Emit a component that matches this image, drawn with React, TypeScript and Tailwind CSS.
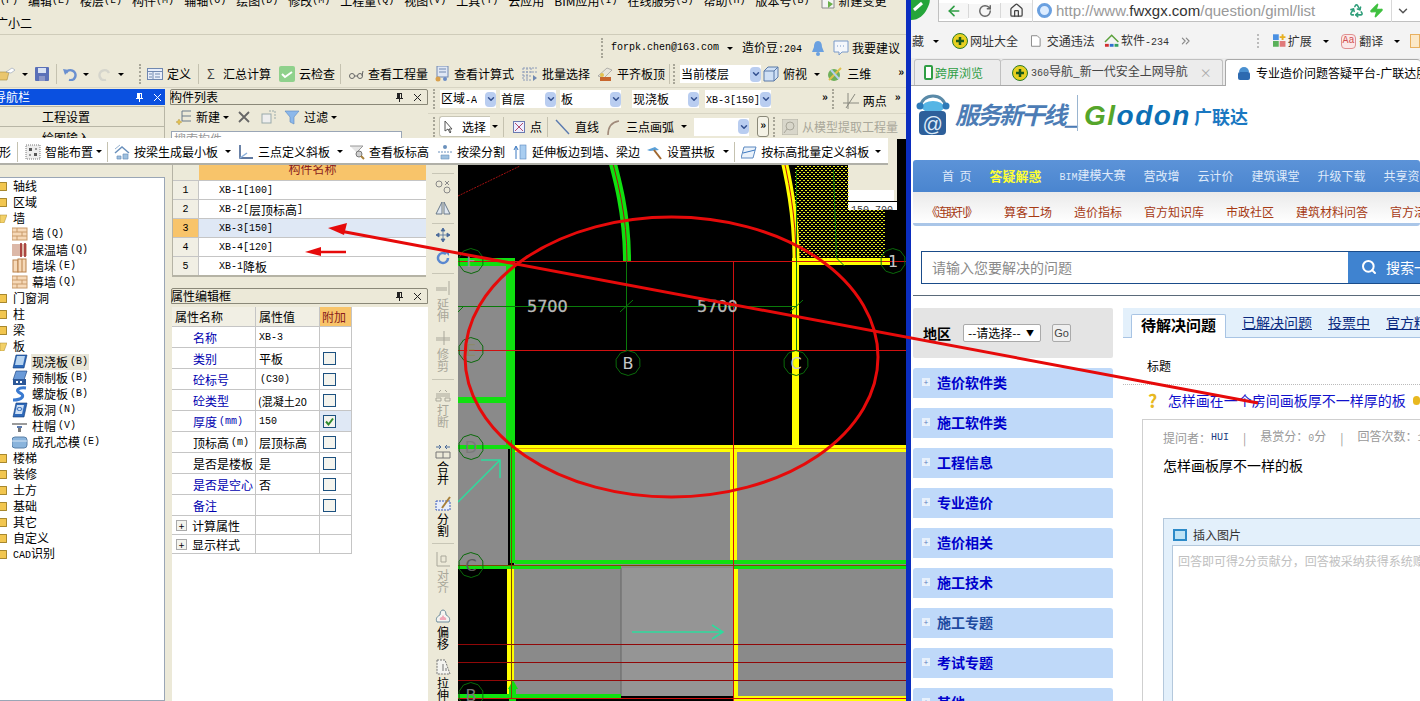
import type { ReactNode } from "react";
import { ArrowLeft, RotateCw, House, Search, ChevronDown, Zap, Recycle, ChevronsRight } from "lucide-react";

const mono = "[font-family:'Liberation_Mono',monospace] text-[10px]";

function Caret({ className = "" }: { className?: string }) {
  return <span className={`inline-block shrink-0 border-x-[3px] border-t-[3px] border-x-transparent border-t-black ${className}`} />;
}

function Grip({ className = "" }: { className?: string }) {
  return <span className={`inline-block h-[20px] w-[2px] shrink-0 border-l-2 border-dotted border-[#a8a698] ${className}`} />;
}

function Sep({ className = "" }: { className?: string }) {
  return <span className={`inline-block h-[20px] w-px shrink-0 bg-[#c5c2b0] ${className}`} />;
}

function More({ className = "" }: { className?: string }) {
  return <span className={`shrink-0 text-[11px] font-bold leading-none ${className}`}>»</span>;
}

function Ico({ children, className = "" }: { children: ReactNode; className?: string }) {
  return (
    <svg viewBox="0 0 16 16" className={`h-4 w-4 shrink-0 ${className}`}>
      {children}
    </svg>
  );
}

function Tool({ icon, label, className = "", dim }: { icon?: ReactNode; label: string; className?: string; dim?: boolean }) {
  return (
    <span className={`flex shrink-0 items-center gap-[4px] ${dim ? "text-[#a9a79a]" : "text-black"} ${className}`}>
      {icon}
      <span>{label}</span>
    </span>
  );
}

function Combo({ children, className = "" }: { children: ReactNode; className?: string }) {
  return (
    <span className={`flex h-[18px] shrink-0 items-center justify-between bg-white pl-[1px] ${className}`}>
      <span className="overflow-hidden whitespace-nowrap">{children}</span>
      <span className="flex h-[15px] w-[11px] shrink-0 items-center justify-center rounded-sm bg-[#b9cdf0]">
        <ChevronDown size={10} strokeWidth={3.5} className="text-[#33508f]" />
      </span>
    </span>
  );
}

function PinX({ light }: { light?: boolean }) {
  const color = light ? "#ffffff" : "#222222";
  return (
    <span className="flex items-center gap-[9px]">
      <svg viewBox="0 0 9 9" className="h-[9px] w-[9px]">
        <path d="M2 0h5v5h1v1H5v3H4V6H1V5h1z M5 1v4h1V1z" fill={color} fillRule="evenodd" />
      </svg>
      <svg viewBox="0 0 9 9" className="h-[9px] w-[9px]">
        <path d="M1 1l7 7M8 1L1 8" stroke={color} strokeWidth="1" />
      </svg>
    </span>
  );
}

/* ---- toolbar icons ---- */
const IcoOpen = (
  <Ico>
    <path d="M-3 6h12l-2 8H-3z" fill="#eac66d" stroke="#a88a3a" strokeWidth=".6" />
    <path d="M6 6l6-4 3 2-4 3z" fill="#fff" stroke="#7a8ba8" strokeWidth=".5" />
  </Ico>
);
const IcoSave = (
  <Ico>
    <rect x="1" y="1" width="14" height="14" rx="1" fill="#5a70b8" />
    <rect x="4" y="2" width="8" height="5" fill="#d9e2f2" />
    <rect x="5" y="10" width="6" height="5" fill="#8a96c8" />
  </Ico>
);
const IcoDefine = (
  <Ico>
    <rect x=".5" y="2.5" width="15" height="11" fill="#e8eefa" stroke="#7088b0" />
    <path d="M1 5.5h14M6 5.5v8M8 8h5M8 11h5M2 8h3M2 11h3" stroke="#7088b0" />
  </Ico>
);
const IcoCloud = (
  <Ico>
    <rect x="0" y="0" width="16" height="16" rx="2" fill="#8fd18c" />
    <path d="M3 8l3 3 7-5" stroke="#fff" strokeWidth="2" fill="none" />
  </Ico>
);
const IcoGlasses = (
  <Ico>
    <circle cx="4" cy="10" r="2.5" fill="none" stroke="#666" />
    <circle cx="12" cy="10" r="2.5" fill="none" stroke="#666" />
    <path d="M6.500 10h3M14 10l1-5" stroke="#666" />
  </Ico>
);
const IcoCalc = (
  <Ico>
    <rect x="3" y="0" width="11" height="11" fill="#dfe7f4" stroke="#7088b0" />
    <path d="M5 3h7M5 6h7" stroke="#7088b0" />
    <circle cx="4" cy="13" r="2.500" fill="#d9a04c" />
    <circle cx="11" cy="13" r="2" fill="#6a8cc8" />
  </Ico>
);
const IcoBatch = (
  <Ico>
    <path d="M1 2h14M1 2v12h9M5 2v12M9 2v5M1 6h14M1 10h9" stroke="#8a9ab8" strokeDasharray="2 1" fill="none" />
    <path d="M11 9l4 3-4 3z" fill="#7088b0" />
  </Ico>
);
const IcoFlat = (
  <Ico>
    <path d="M1 10L10 2l5 2-8 8z" fill="#e8e6dc" stroke="#888" strokeWidth=".6" />
    <rect x="3" y="11" width="11" height="4" fill="#c8662e" />
    <circle cx="5" cy="9" r="2" fill="#e3c14d" />
  </Ico>
);
const IcoCube = (
  <Ico>
    <path d="M1 5l4-4h10v10l-4 4H1z" fill="#cfe0f5" stroke="#5a7aa8" />
    <path d="M1 5h10v10M11 5l4-4" stroke="#5a7aa8" fill="none" />
  </Ico>
);
const Ico3d = (
  <Ico>
    <circle cx="7" cy="9" r="6" fill="#6fb05a" />
    <path d="M2 14L14 2" stroke="#e0c14d" strokeWidth="2" />
    <path d="M4 4l8 9" stroke="#b5d0ea" strokeWidth="2" />
  </Ico>
);
const IcoNew = (
  <Ico>
    <path d="M6 2h9M6 7h9M6 12h9M6 2v10" stroke="#6a7a8a" fill="none" />
    <path d="M3 10l1 2 2 1-2 1-1 2-1-2-2-1 2-1z" fill="#e3c14d" stroke="#a88a3a" strokeWidth=".4" />
  </Ico>
);
const IcoFilter = (
  <Ico>
    <path d="M1 2h14L10 8v7l-4-2V8z" fill="#8cb8ea" stroke="#5a88c0" strokeWidth=".6" />
  </Ico>
);
const IcoGrid = (
  <Ico>
    <rect x="1" y="1" width="14" height="14" fill="#eee" stroke="#7a7a7a" strokeDasharray="1 1" />
    <path d="M4 4h3v3H4zM9 9h3v3H9z" fill="#555" />
    <path d="M10 4h2v2h-2zM4 10h2v2H4z" fill="#999" />
  </Ico>
);
const IcoBeam = (
  <Ico>
    <path d="M1 9l7-6 7 6" stroke="#6a90bc" strokeWidth="1.500" fill="none" />
    <path d="M1 5l5-4M3 12h4v3H3zM9 10h5v5H9z" fill="#9fc0de" stroke="#6a90bc" strokeWidth=".7" />
  </Ico>
);
const IcoThree = (
  <Ico>
    <path d="M2 1v13h13" stroke="#2c4f84" strokeWidth="1.400" fill="none" />
    <path d="M2 14l7-5" stroke="#8ab0dc" strokeWidth="1.500" />
  </Ico>
);
const IcoLens = (
  <Ico>
    <path d="M1 2h13L9 7v3" stroke="#999" fill="#e5e5e5" />
    <circle cx="10" cy="10" r="3" fill="#cfcfcf" stroke="#777" />
    <path d="M12 12l3 3" stroke="#a8803a" strokeWidth="2" />
  </Ico>
);
const IcoSplit = (
  <Ico>
    <circle cx="8" cy="3" r="2" fill="#6a90bc" />
    <path d="M1 8h14" stroke="#6a90bc" strokeDasharray="2 1" />
    <path d="M4 11h8v4H4z" fill="#9fc0de" stroke="#6a90bc" strokeWidth=".6" />
  </Ico>
);
const IcoExtend = (
  <Ico>
    <path d="M4 15V3M2 6l2-4 2 4" stroke="#3a78c0" fill="none" />
    <rect x="8" y="1" width="6" height="14" fill="#a9cdf0" stroke="#5a88c0" strokeWidth=".6" />
  </Ico>
);
const IcoHammer = (
  <Ico>
    <path d="M0 6l8-3 4 3-9 1z" fill="#5aa0d8" />
    <path d="M7 6l7 9" stroke="#a0672e" strokeWidth="2" />
  </Ico>
);
const IcoBatchSlope = (
  <Ico>
    <path d="M3 3h12l-3 11H0z" fill="#eaf2fb" stroke="#5a88c0" />
    <path d="M2 9l12-3" stroke="#3a78c0" />
  </Ico>
);

const menus: [string, string][] = [
  ["文件", "(F)"], ["编辑", "(E)"], ["楼层", "(L)"], ["构件", "(M)"], ["辅轴", "(O)"], ["绘图", "(D)"], ["修改", "(M)"],
  ["工程量", "(Q)"], ["视图", "(V)"], ["工具", "(T)"], ["云应用", ""], ["BIM应用", "(I)"], ["在线服务", "(S)"], ["帮助", "(H)"], ["版本号", "(B)"],
];

function MenuBar() {
  return (
    <div className="h-[35px] shrink-0 overflow-hidden border-b border-[#cfccba]">
      <div className="-ml-[24px] -mt-[7px] flex h-[16px] items-center gap-[10px] whitespace-nowrap">
        {menus.map(([t, k]) => (
          <span key={t} className="flex items-center">
            {t}
            <span className={mono}>{k}</span>
          </span>
        ))}
        <span className="flex items-center gap-[3px]">
          <Ico>
            <path d="M2 1h9l3 3v11H2z" fill="#f4f4f4" stroke="#8a8a8a" />
            <path d="M8 8l5 3-5 4z" fill="#6ab04a" />
          </Ico>
          新建变更
        </span>
      </div>
      <div className="-ml-[4px] mt-[6px]">广小二</div>
    </div>
  );
}

function AccountBar() {
  return (
    <div className="flex h-[26px] shrink-0 items-center justify-end pr-[6px]">
      <Grip className="mr-[8px]" />
      <span className={mono}>forpk.chen@163.com</span>
      <Caret className="ml-[8px]" />
      <span className="ml-[9px]">
        造价豆<span className={mono}>:204</span>
      </span>
      <svg viewBox="0 0 14 16" className="ml-[9px] h-4 w-[14px]">
        <path d="M7 1c3 0 4 3 4 6l2 5H1l2-5c0-3 1-6 4-6z" fill="#6aa0e0" />
        <circle cx="7" cy="14" r="2" fill="#6aa0e0" />
      </svg>
      <svg viewBox="0 0 16 16" className="ml-[8px] h-4 w-4">
        <path d="M1 1h14v11H9l-3 3v-3H1z" fill="#f4f7fb" stroke="#7a9ac8" />
        <path d="M4 6h1M7 6h1M10 6h1" stroke="#7a9ac8" />
      </svg>
      <span className="ml-[3px]">我要建议</span>
    </div>
  );
}

function MainToolbar() {
  return (
    <div className="flex h-[27px] shrink-0 items-center overflow-hidden whitespace-nowrap border-b border-[#d8d5c4]">
      {IcoOpen}
      <Caret className="ml-[6px]" />
      <span className="ml-[6px]">{IcoSave}</span>
      <Sep className="ml-[6px]" />
      <svg viewBox="0 0 14 14" className="ml-[6px] h-[14px] w-[14px]">
        <path d="M3 6a5 5 0 1 1 3 7" stroke="#6a90d0" strokeWidth="2.500" fill="none" />
        <path d="M0 2l6 1-4 5z" fill="#6a90d0" />
      </svg>
      <Caret className="ml-[6px]" />
      <svg viewBox="0 0 14 14" className="ml-[9px] h-[14px] w-[14px]">
        <path d="M11 6a5 5 0 1 0-3 7" stroke="#d5d5cc" strokeWidth="2.500" fill="none" />
      </svg>
      <Caret className="ml-[6px] border-t-[#bbb]" />
      <Grip className="ml-[15px]" />
      <Tool className="ml-[6px]" icon={IcoDefine} label="定义" />
      <Sep className="ml-[7px]" />
      <span className="ml-[8px] w-[12px] text-[13px] text-[#444]">Σ</span>
      <span className="ml-[4px]">汇总计算</span>
      <Tool className="ml-[8px]" icon={IcoCloud} label="云检查" />
      <Sep className="ml-[5px]" />
      <Tool className="ml-[7px]" icon={IcoGlasses} label="查看工程量" />
      <Tool className="ml-[6px]" icon={IcoCalc} label="查看计算式" />
      <Tool className="ml-[8px]" icon={IcoBatch} label="批量选择" />
      <Tool className="ml-[7px]" icon={IcoFlat} label="平齐板顶" />
      <Sep className="ml-[4px]" />
      <Grip className="ml-[3px]" />
      <Combo className="ml-[5px] w-[81px]">当前楼层</Combo>
      <Tool className="ml-[2px]" icon={IcoCube} label="俯视" />
      <Caret className="ml-[7px]" />
      <Tool className="ml-[7px]" icon={Ico3d} label="三维" />
      <More className="ml-[27px] -mt-[6px]" />
    </div>
  );
}

/* ---- left tree ---- */
const IcoBrick = (
  <Ico>
    <rect x="0" y="2" width="15" height="12" fill="#f6d9b8" stroke="#c89a6a" />
    <path d="M0 6h15M0 10h15M5 2v4M10 6v4M5 10v4" stroke="#c89a6a" />
  </Ico>
);
const IcoInsul = (
  <Ico>
    <rect x="0" y="2" width="15" height="12" fill="#dcb8a8" />
    <path d="M9 1v14M13 1v14" stroke="#9a2020" strokeWidth="1.500" />
  </Ico>
);
const IcoPier = (
  <Ico>
    <rect x="1" y="2" width="5" height="12" fill="#f6d9b8" stroke="#b8804a" />
    <rect x="6" y="1" width="8" height="13" fill="#f6d9b8" stroke="#b8804a" />
    <path d="M10 1v13" stroke="#b8804a" />
  </Ico>
);
const IcoSlab = (
  <Ico>
    <path d="M4 1h11l-3 13H1z" fill="#2d68b8" stroke="#123a78" strokeWidth=".6" />
    <path d="M5 2h8l-2 9H3z" fill="#b8d4f0" />
  </Ico>
);
const IcoPre = (
  <Ico>
    <path d="M4 1h11l-3 9H1z" fill="#6a9ad8" stroke="#123a78" strokeWidth=".6" />
    <rect x="1" y="9" width="13" height="6" fill="#2d5898" />
    <path d="M4 11h2v2H4zM8 11h2v2H8z" fill="#fff" />
  </Ico>
);
const IcoSpiral = (
  <Ico>
    <path d="M14 2C6 1 3 5 8 7c5 2 3 7-7 7" stroke="#3a7ad0" strokeWidth="3" fill="none" />
  </Ico>
);
const IcoHole = (
  <Ico>
    <path d="M4 1h11l-3 14H1z" fill="#2d68b8" stroke="#123a78" strokeWidth=".6" />
    <path d="M5 3h7l-2 9H3z" fill="#cfe0f5" />
    <ellipse cx="7.500" cy="7" rx="2.500" ry="1.500" fill="none" stroke="#2d68b8" />
  </Ico>
);
const IcoCap = (
  <Ico>
    <path d="M0 5h15v2H0z" fill="#9a9a9a" />
    <path d="M5 8h5v2H5z" fill="#5a7ab0" />
    <path d="M6 10h3v4H6z" fill="#777" />
  </Ico>
);
const IcoCore = (
  <Ico>
    <rect x="0" y="3" width="15" height="11" rx="3" fill="#8ab4dc" stroke="#5a80a8" />
    <path d="M0 7h15" stroke="#d5e5f5" />
  </Ico>
);

type TreeRow = { t: string; kind: "closed" | "open" | "leaf"; code?: string; icon?: ReactNode; on?: boolean };
const tree: TreeRow[] = [
  { t: "轴线", kind: "closed" },
  { t: "区域", kind: "closed" },
  { t: "墙", kind: "open" },
  { t: "墙", kind: "leaf", code: "(Q)", icon: IcoBrick },
  { t: "保温墙", kind: "leaf", code: "(Q)", icon: IcoInsul },
  { t: "墙垛", kind: "leaf", code: "(E)", icon: IcoPier },
  { t: "幕墙", kind: "leaf", code: "(Q)", icon: IcoBrick },
  { t: "门窗洞", kind: "closed" },
  { t: "柱", kind: "closed" },
  { t: "梁", kind: "closed" },
  { t: "板", kind: "open" },
  { t: "现浇板", kind: "leaf", code: "(B)", icon: IcoSlab, on: true },
  { t: "预制板", kind: "leaf", code: "(B)", icon: IcoPre },
  { t: "螺旋板", kind: "leaf", code: "(B)", icon: IcoSpiral },
  { t: "板洞", kind: "leaf", code: "(N)", icon: IcoHole },
  { t: "柱帽", kind: "leaf", code: "(V)", icon: IcoCap },
  { t: "成孔芯模", kind: "leaf", code: "(E)", icon: IcoCore },
  { t: "楼梯", kind: "closed" },
  { t: "装修", kind: "closed" },
  { t: "土方", kind: "closed" },
  { t: "基础", kind: "closed" },
  { t: "其它", kind: "closed" },
  { t: "自定义", kind: "closed" },
  { t: "CAD识别", kind: "closed" },
];

function NavPanel() {
  return (
    <div className="flex w-[165px] shrink-0 flex-col">
      <div className="flex h-[16px] shrink-0 items-center justify-between bg-[#0a50e0] pr-[3px] text-white">
        <span className="-ml-[6px] text-[12px]">导航栏</span>
        <PinX light />
      </div>
      <div className="mt-[1px] flex h-[21px] shrink-0 items-center border border-l-0 border-[#b8b6a6] pl-[42px]">工程设置</div>
      <div className="flex h-[21px] shrink-0 items-center border-r border-[#b8b6a6] pl-[42px]">绘图输入</div>
      <div className="mt-[29px] flex-1 border border-l-0 border-[#9aa6b6] bg-white">
        {tree.map((r, i) =>
          r.kind === "leaf" ? (
            <div key={i} className="flex h-4 items-center pl-[12px]">
              {r.icon}
              <span className={`ml-[3px] flex h-4 items-center px-[1px] ${r.on ? "bg-[#e8e6d8]" : ""}`}>
                {r.t}
                <span className={`${mono} ml-[2px]`}>{r.code}</span>
              </span>
            </div>
          ) : (
            <div key={i} className="flex h-4 items-center">
              {r.kind === "closed" ? (
                <span className="h-[9px] w-[7px] rounded-r-[1px] border border-l-0 border-[#a8882e] bg-[#f2c64f]" />
              ) : (
                <svg viewBox="0 0 7 9" className="h-[9px] w-[7px]">
                  <path d="M0 1h7L4 9H0z" fill="#f2d068" stroke="#a8882e" strokeWidth=".5" />
                </svg>
              )}
              <span className="ml-[6px]">
                {r.t === "CAD识别" ? (
                  <>
                    <span className={mono}>CAD</span>识别
                  </>
                ) : (
                  r.t
                )}
              </span>
            </div>
          ),
        )}
      </div>
    </div>
  );
}

/* ---- component list + properties ---- */
const parts = ["XB-1[100]", "XB-2[层顶标高]", "XB-3[150]", "XB-4[120]", "XB-1降板"];

type Prop = { name: ReactNode; val: ReactNode; blue?: boolean; box?: boolean; on?: boolean };
const props: Prop[] = [
  { name: "名称", val: <span className={mono}>XB-3</span>, blue: true },
  { name: "类别", val: "平板", blue: true, box: true },
  { name: "砼标号", val: <span className={`${mono} ml-[1px]`}>(C30)</span>, blue: true, box: true },
  { name: "砼类型", val: <span className="-ml-px text-[11px]">(混凝土20</span>, blue: true, box: true },
  { name: <>厚度<span className={`${mono} ml-[2px]`}>(mm)</span></>, val: <span className={mono}>150</span>, blue: true, box: true, on: true },
  { name: <>顶标高<span className={`${mono} ml-[2px]`}>(m)</span></>, val: "层顶标高", box: true },
  { name: "是否是楼板", val: "是", box: true },
  { name: "是否是空心", val: "否", blue: true, box: true },
  { name: "备注", val: "", blue: true, box: true },
];

function PartsPanel() {
  return (
    <div className="ml-[3px] flex w-[260px] shrink-0 flex-col">
      <div className="ml-[2px] flex h-[16px] shrink-0 items-center justify-between rounded-t-[2px] border border-[#8a8878] pr-[5px]">
        <span className="-ml-px -mt-px">构件列表</span>
        <PinX />
      </div>
      <div className="flex h-[26px] shrink-0 items-center pb-[2px] pl-[8px]">
        <Tool icon={IcoNew} label="新建" />
        <Caret className="ml-[3px]" />
        <svg viewBox="0 0 12 12" className="ml-[9px] h-[12px] w-[12px]">
          <path d="M1 1l10 10M11 1L1 11" stroke="#666" strokeWidth="1.800" />
        </svg>
        <span className="ml-[11px]">
          <Ico>
            <rect x="1" y="5" width="9" height="9" fill="#eee" stroke="#9aa" />
            <path d="M8 2h6v9" stroke="#9aa" strokeDasharray="2 1" fill="none" />
          </Ico>
        </span>
        <Tool className="ml-[7px]" icon={IcoFilter} label="过滤" />
        <Caret className="ml-[3px]" />
      </div>
      <div className="ml-[3px] h-[8px] w-[231px] shrink-0 overflow-hidden border border-[#9aa6b6] bg-white text-[#999]">
        <div className="-mt-[1px] pl-[2px]">搜索构件...</div>
      </div>
      <div className="h-[25px] shrink-0" />
      <div className="ml-[4px] w-[254px] shrink-0 border-b-2 border-l border-[#b5b3a5] bg-white">
        <div className="flex h-[16px]">
          <span className="w-[26px] bg-[#ecead9]" />
          <span className="flex-1 bg-[#f8c46a] text-center leading-[10px] text-[#8a1c1c]">构件名称</span>
        </div>
        {parts.map((p, i) => (
          <div key={p} className={`flex h-[19px] border-t border-[#c5c5c5] ${i === 2 ? "bg-[#dfe8f5]" : "bg-white"}`}>
            <span className={`flex w-[26px] items-center justify-center border-r border-[#c5c5c5] pt-[1px] ${mono} ${i === 2 ? "bg-[#f8c46a]" : "bg-[#f1efe4]"}`}>
              {i + 1}
            </span>
            <span className="flex items-center pl-[20px] pt-[1px]">
              {p.split(/([\u4e00-\u9fa5]+)/).map((s, j) =>
                j % 2 ? <span key={j}>{s}</span> : <span key={j} className={mono}>{s}</span>,
              )}
            </span>
          </div>
        ))}
      </div>
      <div className="ml-[3px] mt-[11px] flex h-[16px] shrink-0 items-center justify-between rounded-t-[2px] border border-[#8a8878] pr-[5px]">
        <span className="-ml-px">属性编辑框</span>
        <PinX />
      </div>
      <div className="ml-[4px] mt-[3px] flex-1 bg-white">
        <div className="grid w-[180px] grid-cols-[84px_64px_32px]">
          <Cell className="h-[20px] bg-[#f1efe4] pl-[3px]">属性名称</Cell>
          <Cell className="h-[20px] bg-[#f1efe4] pl-[3px]">属性值</Cell>
          <Cell className="h-[20px] bg-[#f8c46a] pl-[2px] text-[#8a1c1c]">附加</Cell>
          {props.map((p, i) => (
            <div key={i} className="contents">
              <Cell className={`h-[21px] pl-[21px] pt-[2px] ${p.blue ? "text-[#0000b0]" : ""}`}>{p.name}</Cell>
              <Cell className="h-[21px] pl-[3px] pt-[2px]">{p.val}</Cell>
              <Cell className={`h-[21px] pl-[3px] pt-[1px] ${p.on ? "bg-[#dfe8f5]" : ""}`}>
                {p.box && (
                  <span className="flex h-[13px] w-[13px] items-center justify-center border border-[#1c5180] bg-[#f4f4ee]">
                    {p.on && (
                      <svg viewBox="0 0 11 11" className="h-[11px] w-[11px]">
                        <path d="M2 5.500l2.500 3L9 2.500" stroke="#2d8a2d" strokeWidth="2" fill="none" />
                      </svg>
                    )}
                  </span>
                )}
              </Cell>
            </div>
          ))}
          {["计算属性", "显示样式"].map((t) => (
            <div key={t} className="contents">
              <Cell className="h-[19px] pl-[4px] pt-[1px]">
                <span className="mr-[5px] flex h-[11px] w-[11px] items-center justify-center border border-[#aaa] bg-[#f4f4ee] text-[10px] leading-none">+</span>
                {t}
              </Cell>
              <Cell className="h-[19px]" />
              <Cell className="h-[19px]" />
            </div>
          ))}
        </div>
      </div>
    </div>
  );
}

function Cell({ children, className = "" }: { children?: ReactNode; className?: string }) {
  return <div className={`flex items-center whitespace-nowrap border-b border-r border-[#c5c5c5] ${className}`}>{children}</div>;
}

/* ---- upper right toolbars + canvas ---- */
function CadToolbars() {
  return (
    <>
      <div className="flex h-[25px] shrink-0 items-center whitespace-nowrap border-b border-[#d8d5c4] pb-[4px] pl-[5px]">
        <Grip />
        <Combo className="ml-[5px] w-[56px]">
          区域<span className={mono}>-A</span>
        </Combo>
        <Combo className="ml-[4px] w-[56px]">首层</Combo>
        <Combo className="ml-[4px] w-[61px]">板</Combo>
        <Combo className="ml-[11px] w-[67px]">现浇板</Combo>
        <Combo className="ml-[6px] w-[66px]">
          <span className={mono}>XB-3[150]</span>
        </Combo>
        <More className="ml-[51px] -mt-[6px]" />
        <Grip className="ml-[4px]" />
        <Tool
          className="ml-[9px] mt-[3px] gap-[3px]"
          label="两点"
          icon={
            <Ico>
              <path d="M0 10h16M5 0v16M12 1L3 15" stroke="#8a8a80" fill="none" />
            </Ico>
          }
        />
        <More className="ml-[8px] -mt-[6px]" />
      </div>
      <div className="flex h-[25px] shrink-0 items-center whitespace-nowrap pl-[5px]">
        <Grip />
        <span className="ml-[4px] flex h-[21px] w-[51px] items-center rounded-l-[3px] border border-r-0 border-[#c8c6b6] bg-white pl-[4px]">
          <svg viewBox="0 0 10 14" className="h-[14px] w-[10px]">
            <path d="M1 1v10l3-2 2 4 1-1-2-3h3z" fill="#fff" stroke="#555" />
          </svg>
          <span className="ml-[8px]">选择</span>
        </span>
        <Caret className="ml-[2px]" />
        <Sep className="ml-[5px]" />
        <Tool
          className="ml-[9px] gap-[5px]"
          label="点"
          icon={
            <svg viewBox="0 0 12 12" className="h-[12px] w-[12px]">
              <rect x=".5" y=".5" width="11" height="11" fill="#eef" stroke="#6a7ab0" />
              <path d="M2 2l8 8M10 2l-8 8" stroke="#b04a6a" />
            </svg>
          }
        />
        <Sep className="ml-[5px]" />
        <Tool
          className="ml-[7px]"
          label="直线"
          icon={
            <Ico>
              <path d="M1 1l13 14" stroke="#5a7ab0" strokeWidth="1.400" />
            </Ico>
          }
        />
        <Tool
          className="ml-[7px]"
          label="三点画弧"
          icon={
            <Ico>
              <path d="M2 16C2 8 6 3 13 2" stroke="#a08a7a" strokeWidth="1.600" fill="none" />
            </Ico>
          }
        />
        <Caret className="ml-[7px]" />
        <Combo className="ml-[7px] w-[55px]"> </Combo>
        <span className="ml-[8px] flex h-[21px] w-[12px] items-start justify-center rounded-[3px] border border-[#8a8878] bg-[#f4f2e6] pt-[2px]">
          <More />
        </span>
        <Grip className="ml-[4px]" />
        <Tool
          className="ml-[7px]"
          dim
          label="从模型提取工程量"
          icon={
            <Ico>
              <rect x="0" y="0" width="16" height="16" fill="#d8d6ca" stroke="#b5b3a5" />
              <circle cx="8" cy="7" r="4" fill="none" stroke="#a9a79a" />
              <path d="M5 10l-3 4" stroke="#a9a79a" />
            </Ico>
          }
        />
      </div>
    </>
  );
}

type SideTool = { icon: ReactNode; text?: string; dim?: boolean; h: string; rule?: string };
const sideTools: SideTool[] = [
  {
    h: "h-[21px]",
    icon: (
      <Ico>
        <circle cx="4" cy="5" r="3" fill="none" stroke="#888" />
        <circle cx="12" cy="11" r="3" fill="none" stroke="#888" />
        <path d="M10 2l4 4M14 2l-4 4" stroke="#888" />
      </Ico>
    ),
  },
  {
    h: "h-[27px]",
    rule: "mb-[3px]",
    icon: (
      <Ico>
        <path d="M7 2v12H1zM9 2v12h6z" fill="#dfe7f0" stroke="#6a7a8a" />
      </Ico>
    ),
  },
  {
    h: "h-[23px]",
    icon: (
      <Ico>
        <path d="M8 1v14M1 8h14M8 1L6 4h4zM8 15l-2-3h4zM1 8l3-2v4zM15 8l-3-2v4z" stroke="#4a6a9a" fill="#4a6a9a" strokeWidth=".8" />
      </Ico>
    ),
  },
  {
    h: "h-[30px]",
    rule: "mb-[6px]",
    icon: (
      <Ico>
        <path d="M13 8a5 5 0 1 1-2-4" stroke="#5a88d0" strokeWidth="2.500" fill="none" />
        <path d="M9 1h5v5z" fill="#5a88d0" />
      </Ico>
    ),
  },
  {
    h: "h-[50px]",
    text: "延伸",
    dim: true,
    icon: (
      <Ico>
        <path d="M14 1v14M1 8h11M1 10h11" stroke="#a9a79a" fill="none" />
      </Ico>
    ),
  },
  {
    h: "h-[56px]",
    text: "修剪",
    dim: true,
    rule: "mb-[6px]",
    icon: (
      <Ico>
        <path d="M9 1v14M1 8h14M1 10h14" stroke="#a9a79a" fill="none" />
      </Ico>
    ),
  },
  {
    h: "h-[57px]",
    text: "打断",
    dim: true,
    icon: (
      <Ico>
        <path d="M1 8h14M1 10h14M4 6l2-2M12 6l-2-2" stroke="#a9a79a" fill="none" />
        <path d="M1 12h5v3H1zM10 12h5v3h-5z" fill="none" stroke="#a9a79a" />
      </Ico>
    ),
  },
  {
    h: "h-[52px]",
    text: "合并",
    icon: (
      <Ico>
        <path d="M1 4h5M15 4h-5M4 2l2 2-2 2M12 2l-2 2 2 2" stroke="#4a6a9a" fill="none" />
        <path d="M1 9h14v6H1zM8 9v6" stroke="#777" fill="none" />
      </Ico>
    ),
  },
  {
    h: "h-[56px]",
    text: "分割",
    rule: "mb-[7px]",
    icon: (
      <Ico>
        <path d="M1 6h14v9H1z" fill="#e8eefa" stroke="#3a5ac0" strokeDasharray="2 1" />
        <path d="M7 13L15 2" stroke="#a8803a" strokeWidth="2" />
      </Ico>
    ),
  },
  {
    h: "h-[57px]",
    text: "对齐",
    dim: true,
    icon: (
      <Ico>
        <path d="M2 1v14h13M6 5h5v6H6z" stroke="#a9a79a" fill="none" />
      </Ico>
    ),
  },
  {
    h: "h-[51px]",
    text: "偏移",
    icon: (
      <Ico>
        <path d="M2 14c-2-4 1-6 3-7 0-3 1-5 3-5s3 2 3 5c2 1 5 3 3 7z" fill="#f4f4f0" stroke="#6a8a9a" />
        <path d="M5 12c-1-2 1-3 2-3 0-1 1-2 1-2s1 1 1 2c1 0 3 1 2 3z" fill="#f0a8b8" />
      </Ico>
    ),
  },
  {
    h: "h-[50px]",
    text: "拉伸",
    icon: (
      <Ico>
        <path d="M2 1h8l5 14H2z" fill="#f4f4f0" stroke="#777" strokeDasharray="2 1" />
        <path d="M8 5v7M11 9v3" stroke="#777" />
      </Ico>
    ),
  },
];

function SideBar() {
  return (
    <div className="flex w-[30px] shrink-0 flex-col items-center overflow-hidden pt-[34px]">
      <div className="mb-[5px] h-px w-[22px] shrink-0 bg-[#c8c6b6]" />
      {sideTools.map((s, i) => (
        <div key={i} className={`flex w-[24px] shrink-0 flex-col items-center ${s.h}`}>
          {s.icon}
          {s.text && (
            <span className={`mt-[2px] flex flex-col text-[12px] leading-[12px] ${s.dim ? "text-[#a9a79a]" : "text-black"}`}>
              <span>{s.text[0]}</span>
              <span>{s.text[1]}</span>
            </span>
          )}
          {s.rule && <span className={`mt-auto h-px w-[22px] shrink-0 bg-[#c8c6b6] ${s.rule}`} />}
        </div>
      ))}
    </div>
  );
}

function ngon(cx: number, cy: number, r: number, n = 10) {
  return Array.from({ length: n }, (_, i) => {
    const a = (i * 2 * Math.PI) / n + 0.3;
    return `${(cx + r * Math.cos(a)).toFixed(1)},${(cy + r * Math.sin(a)).toFixed(1)}`;
  }).join(" ");
}

// yellow stipple of the slab area, skipping the box that covers its upper right
function hatchDots() {
  let d = "";
  for (let y = 140, row = 0; y < 258; y += 2, row++) {
    for (let x = 795 + (row % 2) * 2; x < 885; x += 4) {
      if (x >= 848 && y < 210) continue;
      d += `M${x} ${y + 0.5}h2`;
    }
  }
  return d;
}

const G = "#10e010";
const Y = "#ffff00";
const bubbles: [number, number, string, string][] = [
  [471, 261, "F", "#9a9a9a"],
  [471, 350, "E", "#8a8a6a"],
  [471, 447, "D", "#7a7a7a"],
  [471, 565, "C", "#5a5a5a"],
  [471, 695, "B", "#7a7a7a"],
  [628, 363, "B", "#c8c8c8"],
  [796, 363, "C", "#c8c8c8"],
  [893, 261, "1", "#c8c8c8"],
];

function Canvas() {
  return (
    <svg viewBox="458 139 448 562" className="h-[562px] w-[448px] shrink-0 bg-black">
      {/* grey rooms */}
      <rect x="458" y="264" width="50" height="310" fill="#8a8a8a" />
      <rect x="514" y="450" width="392" height="246" fill="#8a8a8a" />
      <rect x="621" y="568" width="112" height="128" fill="#959595" />
      <rect x="458" y="568" width="50" height="128" fill="#000" />
      <path d="M621 568v128" stroke="#666" />

      {/* overlapped box + hatch */}
      <rect x="848" y="139" width="49" height="51" fill="#ece9d8" />
      <rect x="848" y="190" width="46" height="11" fill="#fff" />
      <rect x="894" y="190" width="3" height="11" fill="#ece9d8" />
      <path d="M848 201.500h49" stroke="#000" />
      <rect x="848" y="202" width="49" height="8" fill="#fff" />
      <text x="851" y="213" fontSize="10" fill="#333" fontFamily="Liberation Mono">150 700</text>
      <rect x="848" y="210" width="50" height="49" fill="#000" />
      <path d={hatchDots()} stroke="#e8e820" strokeWidth="1" shapeRendering="crispEdges" />

      {/* arcs */}
      <path d="M606 139C618 180 627 215 627 261" stroke={G} strokeWidth="8" fill="none" />
      <path d="M606 139C618 180 627 215 627 261" stroke="#a01010" strokeWidth="1" fill="none" />
      <path d="M779 139C789 180 796 215 796 261" stroke={Y} strokeWidth="7" fill="none" />
      <path d="M779 139C789 180 796 215 796 261" stroke="#c01010" strokeWidth="1" fill="none" />

      {/* walls */}
      <rect x="458" y="258" width="56" height="8" fill={G} />
      <rect x="506" y="258" width="9" height="190" fill={G} />
      <rect x="458" y="397" width="50" height="6" fill={G} />
      <rect x="458" y="445" width="56" height="4" fill={G} />
      <rect x="510" y="445" width="5" height="118" fill={G} />
      <rect x="792" y="258" width="7" height="188" fill={Y} />
      <rect x="796" y="258" width="94" height="7" fill={Y} />
      <rect x="515" y="445" width="391" height="7" fill={Y} />
      <path d="M515 448.500h391" stroke="#e8a000" />
      <rect x="730" y="450" width="7" height="112" fill={Y} />
      <rect x="515" y="560" width="391" height="4" fill={G} />
      <rect x="458" y="565" width="163" height="4" fill={G} />
      <rect x="734" y="565" width="172" height="4" fill={G} />
      <rect x="507" y="569" width="7" height="126" fill={Y} />
      <rect x="734" y="569" width="4" height="127" fill={Y} />
      <rect x="734" y="696" width="172" height="5" fill={Y} />
      <rect x="458" y="694" width="163" height="4" fill={G} />
      <path d="M513 680l5 9h-10z" fill={G} />
      <rect x="509" y="688" width="7" height="13" fill={G} />

      {/* axis lines */}
      <path d="M458 261.500h448M458 350.500h448M733.500 261v440" stroke="#d01010" />
      <path d="M458 644.500h448M458 662.500h448M458 680.500h448" stroke="#900808" />
      <path d="M458 698.500h448" stroke="#d01010" />
      <path d="M511.500 440v258M458 565.500h448" stroke="#7a4a00" />
      <path d="M458 306.500h338M626.500 261v90M796.500 170v181" stroke="#0a7a0a" />
      <path d="M458 196l62-30" stroke="#a01010" strokeDasharray="2 1" />
      <path d="M620 312l13-12M790 312l13-12M458 312l6-6" stroke="#0a7a0a" />
      <path d="M833.500 170l3 88 8 8" stroke="#0a7a0a" fill="none" />

      {/* teal arrows */}
      <path d="M458 502l42-42M481 460h19v18M632 632h90M712 625l11 7-11 7" stroke="#2edb9d" strokeWidth="1.500" fill="none" />

      {bubbles.map(([x, y, t, c]) => (
        <g key={`${x}-${y}`}>
          <polygon points={ngon(x, y, 12.5)} fill="none" stroke="#0a6a0a" />
          <text x={x} y={y + 6} textAnchor="middle" fontSize="16" fontFamily="DejaVu Sans" fill={c}>
            {t}
          </text>
        </g>
      ))}
      <text x="527" y="312" fontSize="16" fontFamily="DejaVu Sans" fill="#b8b8b8" stroke="#b8b8b8" strokeWidth=".3">5700</text>
      <text x="697" y="312" fontSize="16" fontFamily="DejaVu Sans" fill="#b8b8b8" stroke="#b8b8b8" strokeWidth=".3">5700</text>
    </svg>
  );
}

function FloatBar() {
  return (
    <div className="absolute left-0 top-[138px] z-20 flex h-[27px] w-[888px] items-center whitespace-nowrap border-b-2 border-[#b0b0a8] bg-white pt-[2px]">
      <span className="-ml-[1px]">形</span>
      <Sep className="ml-[6px]" />
      <Tool className="ml-[7px]" icon={IcoGrid} label="智能布置" />
      <Caret className="ml-[3px]" />
      <Sep className="ml-[5px]" />
      <Tool className="ml-[6px]" icon={IcoBeam} label="按梁生成最小板" />
      <Caret className="ml-[7px]" />
      <Tool className="ml-[7px] gap-[2px]" icon={IcoThree} label="三点定义斜板" />
      <Caret className="ml-[7px]" />
      <Tool className="ml-[6px]" icon={IcoLens} label="查看板标高" />
      <Tool className="ml-[8px]" icon={IcoSplit} label="按梁分割" />
      <Tool className="ml-[7px]" icon={IcoExtend} label="延伸板边到墙、梁边" />
      <Tool className="ml-[7px]" icon={IcoHammer} label="设置拱板" />
      <Caret className="ml-[8px]" />
      <Sep className="ml-[5px]" />
      <Tool className="ml-[6px]" icon={IcoBatchSlope} label="按标高批量定义斜板" />
      <Caret className="ml-[6px]" />
    </div>
  );
}

function CadWindow() {
  return (
    <div className="flex h-full w-[906px] shrink-0 flex-col overflow-hidden bg-[#ece9d8]">
      <MenuBar />
      <AccountBar />
      <MainToolbar />
      <div className="flex min-h-0 flex-1 pt-[1px]">
        <NavPanel />
        <PartsPanel />
        <div className="flex w-[478px] shrink-0 flex-col">
          <CadToolbars />
          <div className="flex min-h-0 flex-1">
            <SideBar />
            <Canvas />
          </div>
        </div>
      </div>
    </div>
  );
}

/* ---- browser window ---- */
const navItems = ["答疑解惑", "BIM建模大赛", "营改增", "云计价", "建筑课堂", "升级下载", "共享资源"];
const subItems = ["算客工场", "造价指标", "官方知识库", "市政社区", "建筑材料问答", "官方活动"];
const sideItems = ["造价软件类", "施工软件类", "工程信息", "专业造价", "造价相关", "施工技术", "施工专题", "考试专题", "其他"];

function Ball({ className = "" }: { className?: string }) {
  return (
    <svg viewBox="0 0 16 16" className={`h-4 w-4 shrink-0 ${className}`}>
      <circle cx="8" cy="8" r="7.500" fill="#e8d020" stroke="#2a7a2a" strokeWidth="1" />
      <path d="M8 4v8M4 8h8" stroke="#1a5a1a" strokeWidth="2.500" />
    </svg>
  );
}

function BrowserChrome() {
  return (
    <div className="shrink-0 bg-[#f3f3f3]">
      <div className="flex h-[22px] items-center overflow-hidden">
        <svg viewBox="0 0 20 22" className="h-[22px] w-[20px] shrink-0">
          <path d="M0 -4h14c6 0 6 6 2 13-3 6-8 11-16 11z" fill="#25a53a" />
          <path d="M3 10l8-7" stroke="#fff" strokeWidth="3" />
        </svg>
        <div className="ml-[7px] flex h-[22px] flex-1 items-center border-b border-l border-[#c0c0c0] bg-white">
          <span className="flex w-[29px] justify-center bg-[#f6f6f6]">
            <ArrowLeft size={16} strokeWidth={2.500} className="text-[#2f9e44]" />
          </span>
          <span className="flex w-[32px] justify-center border-l border-[#d8d8d8] bg-[#f6f6f6]">
            <RotateCw size={14} strokeWidth={2.500} className="text-[#666]" />
          </span>
          <span className="flex w-[32px] justify-center border-l border-[#d8d8d8] bg-[#f6f6f6]">
            <House size={15} strokeWidth={2} className="text-[#444]" />
          </span>
          <span className="flex flex-1 items-center border-l border-[#d8d8d8] pl-[4px]">
            <span className="h-[15px] w-[15px] rounded-full border-[3px] border-[#6aa0e0] bg-[#dcecff]" />
            <span className="ml-[4px] text-[15px] leading-none [font-family:'Liberation_Sans',sans-serif] text-[#999]">
              http://www.<span className="text-[#333]">fwxgx.com</span>/question/giml/list
            </span>
            <Recycle size={15} strokeWidth={2.500} className="ml-[34px] text-[#2f9e7a]" />
            <Zap size={15} className="ml-[5px] fill-[#3fc03f] text-[#3fc03f]" />
            <span className="ml-[7px] flex h-[22px] items-center border-l border-[#d8d8d8] pl-[4px]">
              <ChevronDown size={14} strokeWidth={2.500} className="text-[#555]" />
            </span>
          </span>
        </div>
      </div>
      <div className="flex h-[36px] items-center whitespace-nowrap pt-[2px] text-[#333]">
        <span className="ml-[1px]">藏</span>
        <Caret className="ml-[9px] border-t-[#888]" />
        <Ball className="ml-[13px]" />
        <span className="ml-[2px]">网址大全</span>
        <svg viewBox="0 0 10 12" className="ml-[13px] h-[12px] w-[10px]">
          <path d="M.500.500h6l3 3v8h-9z" fill="#fff" stroke="#888" />
        </svg>
        <span className="ml-[6px]">交通违法</span>
        <svg viewBox="0 0 16 14" className="ml-[9px] h-[14px] w-4">
          <path d="M1 8l7-7 7 7" stroke="#5aa03a" strokeWidth="1.500" fill="none" />
          <path d="M1 10h4v3H1z" fill="#d03030" />
          <path d="M6 10h4v3H6z" fill="#3070d0" />
          <path d="M11 10h4v3h-4z" fill="#30a060" />
        </svg>
        <span className="ml-[2px]">
          软件<span className={mono}>-234</span>
        </span>
        <ChevronsRight size={14} className="ml-[10px] text-[#888]" />
        <span className="ml-[65px] h-[14px] w-[2px] border-l-2 border-dotted border-[#bbb]" />
        <svg viewBox="0 0 14 14" className="ml-[14px] h-[14px] w-[14px]">
          <rect width="6" height="6" fill="#4a90e2" />
          <rect y="7" width="6" height="6" fill="#5ab05a" />
          <rect x="7" y="7" width="6" height="6" fill="#e07a7a" />
          <path d="M10 0v6M7 3h6" stroke="#e8b020" strokeWidth="2" />
        </svg>
        <span className="ml-[1px]">扩展</span>
        <Caret className="ml-[11px] border-t-[#888]" />
        <span className={`ml-[12px] flex h-[15px] w-[16px] items-center justify-center rounded-sm border border-[#e09090] bg-[#fbe8e8] ${mono} text-[#d05050]`}>Aa</span>
        <span className="ml-[3px]">翻译</span>
        <Caret className="ml-[11px] border-t-[#888]" />
        <span className="ml-[10px] h-[14px] w-[10px] border border-[#e8b060] bg-[#fbe8c8]" />
      </div>
      <div className="flex h-[28px] items-end border-b border-[#a8a8a8] bg-[#ececec] pl-[3px] pb-0">
        <div className="flex h-[26px] w-[87px] items-center rounded-t-[3px] border border-b-0 border-[#c0c0c0] pl-[9px] text-[#2f9e44]">
          <span className="mr-[2px] h-[15px] w-[9px] rounded-[2px] border-2 border-[#2f9e44] bg-white" />
          跨屏浏览
        </div>
        <div className="flex h-[26px] w-[222px] items-center rounded-t-[3px] border border-b-0 border-l-0 border-[#c0c0c0] pl-[11px] text-[#444]">
          <Ball />
          <span className="ml-[3px]">
            <span className={mono}>360</span>导航_新一代安全上网导航
          </span>
          <span className="ml-[12px] text-[#aaa]">×</span>
        </div>
        <div className="-mb-px ml-[2px] flex h-[27px] flex-1 items-center overflow-hidden whitespace-nowrap rounded-t-[3px] border border-b-0 border-r-0 border-[#a8a8a8] bg-white pl-[11px] text-black">
          <svg viewBox="0 0 14 16" className="h-4 w-[14px] shrink-0">
            <path d="M2 7a5 5 0 0 1 10 0" fill="#4a90d0" />
            <rect x="1" y="7" width="12" height="8" rx="2" fill="#2d6ab0" />
          </svg>
          <span className="ml-[5px]">专业造价问题答疑平台-广联达服务新干线</span>
        </div>
      </div>
    </div>
  );
}

function PageHeader() {
  return (
    <>
      <div className="flex h-[74px] shrink-0 items-start pl-[3px] pt-[8px]">
        <svg viewBox="0 0 34 42" className="h-[42px] w-[34px] shrink-0">
          <path d="M5 12a12 10 0 0 1 24 0" fill="none" stroke="#5a8aa8" strokeWidth="3" />
          <ellipse cx="17" cy="13" rx="11" ry="6" fill="#55b5e5" />
          <circle cx="4" cy="12" r="3.500" fill="#2d7ab8" />
          <circle cx="30" cy="12" r="3.500" fill="#2d7ab8" />
          <rect x="3" y="17" width="27" height="24" rx="4" fill="#2d5f9a" />
          <text x="16.500" y="37" textAnchor="middle" fontSize="20" fontStyle="italic" fontFamily="Liberation Sans" fill="#dbeaf8">@</text>
        </svg>
        <span className="ml-[5px] mt-[5px] w-[116px] whitespace-nowrap text-[24px] font-bold italic leading-[30px] tracking-[-2px] text-[#4c7cb5]">服务新干线_</span>
        <span className="ml-[6px] mt-[1px] h-[36px] w-px bg-[#9ab5d0]" />
        <span className="ml-[6px] mt-[5px] text-[28px] font-bold italic leading-[34px] [font-family:'Liberation_Sans',sans-serif] tracking-[1.5px] text-[#0d6fb5]">
          <span className="text-[#55a52a]">Gl</span>odon
        </span>
        <span className="ml-[3px] mt-[10px] text-[18px] font-bold leading-[24px] text-[#1a78c2]">广联达</span>
      </div>
      <div className="flex h-[32px] shrink-0 items-center gap-[18px] whitespace-nowrap rounded-t-[3px] bg-gradient-to-b from-[#5c93d8] to-[#4a85cf] pl-[29px] text-[#dfeafa]">
        <span>首&nbsp;&nbsp;页</span>
        {navItems.map((n, i) => (
          <span key={n} className={i === 0 ? "text-[13px] font-bold text-[#ffff33]" : ""}>
            {n === "BIM建模大赛" ? (
              <>
                <span className={mono}>BIM</span>建模大赛
              </>
            ) : (
              n
            )}
          </span>
        ))}
      </div>
      <div className="flex h-[34px] shrink-0 items-center gap-[22px] whitespace-nowrap rounded-b-[3px] border-b-[3px] border-[#aac6e8] bg-gradient-to-b from-[#eaeaea] to-white pl-[13px] pt-[8px] text-[#a63a14]">
        <span className="mr-[6px] tracking-[-2px]">《连联刊》</span>
        {subItems.map((s) => (
          <span key={s}>{s}</span>
        ))}
      </div>
      <div className="ml-[8px] mt-[25px] flex h-[33px] shrink-0 overflow-hidden border border-r-0 border-[#1a4c8a]">
        <span className="flex w-[426px] shrink-0 items-center pb-[2px] pl-[10px] text-[14px] text-[#8a8a8a]">请输入您要解决的问题</span>
        <span className="flex flex-1 items-center whitespace-nowrap bg-[#3f83d0] pb-[2px] pl-[13px] text-[14px] text-white">
          <Search size={16} strokeWidth={3} className="mr-[9px] shrink-0" />
          搜索一下
        </span>
      </div>
      <div className="mt-[11px] h-px shrink-0 bg-[#5a6a7a]" />
    </>
  );
}

function PageSide() {
  return (
    <div className="flex w-[200px] shrink-0 flex-col gap-[10px]">
      <div className="flex h-[50px] shrink-0 items-center rounded-[2px] bg-[#e4e4e4] pl-[10px]">
        <span className="text-[14px] font-bold text-black">地区</span>
        <span className="ml-[12px] flex h-[18px] w-[78px] items-center justify-between rounded-[2px] border border-[#aaa] bg-white pl-[4px] pr-[6px] text-[12px] text-black">
          --请选择--
          <span className="text-[8px] leading-none">▼</span>
        </span>
        <span className="ml-[11px] flex h-[18px] w-[19px] items-center justify-center rounded-[2px] border border-[#aaa] bg-[#efefef] text-[11px] text-[#444] [font-family:'Liberation_Sans',sans-serif]">Go</span>
      </div>
      {sideItems.map((s) => (
        <div key={s} className="flex h-[30px] shrink-0 items-center rounded-t-[3px] bg-[#bfd9f9] pb-[2px] pl-[9px]">
          <span className="flex h-[8px] w-[8px] items-center justify-center bg-[#e8f1fc] text-[8px] leading-none text-[#5a7ac0]">+</span>
          <span className={`ml-[7px] text-[14px] font-bold ${s === "施工专题" ? "text-[#1e4aa0]" : "text-[#0000cc]"}`}>{s}</span>
        </div>
      ))}
    </div>
  );
}

function PageMain() {
  return (
    <div className="ml-[10px] flex min-w-0 flex-1 flex-col whitespace-nowrap">
      <div className="flex h-[30px] shrink-0 items-end border-b border-[#a8c4e4] bg-[#e3f0fb] pl-[8px]">
        <span className="-mb-px flex h-[24px] w-[95px] shrink-0 items-center justify-center rounded-t-[2px] border border-b-0 border-[#a8c4e4] bg-white pb-[3px] text-[15px] font-bold text-black">待解决问题</span>
        <span className="mb-[7px] ml-[16px] shrink-0 text-[14px] leading-[16px] text-[#0a2a80] underline">已解决问题</span>
        <span className="mb-[7px] ml-[16px] shrink-0 text-[14px] leading-[16px] text-[#0a2a80] underline">投票中</span>
        <span className="mb-[7px] ml-[16px] shrink-0 text-[14px] leading-[16px] text-[#0a2a80] underline">官方精选</span>
      </div>
      <div className="ml-[24px] mt-[20px] text-black">标题</div>
      <div className="mt-[10px] border-t border-dotted border-[#bbb] pl-[25px] pt-[4px]">
        <div className="flex h-[22px] items-center">
          <span className="w-[24px] text-[18px] font-bold leading-none text-[#e8b820]">?</span>
          <span className="text-[14px] text-[#1010cc]">怎样画在一个房间画板厚不一样厚的板</span>
          <span className="ml-[7px] h-[9px] w-[9px] rounded-full bg-[#e8b820]" />
        </div>
      </div>
      <div className="ml-[19px] mt-[8px] flex-1 border-l border-t border-[#cfcfcf] pl-[20px]">
        <div className="flex h-[35px] items-center text-[#999]">
          提问者：<span className={`${mono} text-[#1a3a80]`}>HUI</span>
          <span className="ml-[14px]">|</span>
          <span className="ml-[14px]">悬赏分：<span className={mono}>0</span>分</span>
          <span className="ml-[14px]">|</span>
          <span className="ml-[14px]">回答次数：<span className={mono}>1</span></span>
        </div>
        <div className="mt-[2px] text-[14px] leading-[16px] text-black">怎样画板厚不一样的板</div>
        <div className="mt-[45px] h-[300px] border-l border-t border-[#b4c8dc] bg-[#e3f0fb] pl-[8px]">
          <div className="flex h-[26px] items-center pl-[1px] pt-[5px] text-[#333]">
            <svg viewBox="0 0 14 12" className="mr-[6px] h-[12px] w-[14px]">
              <rect width="14" height="12" fill="#2d8ac8" />
              <rect x="2" y="2" width="10" height="8" fill="#bfe3f5" />
            </svg>
            插入图片
          </div>
          <div className="h-full border-l border-t border-[#b4c8dc] bg-white pl-[5px] pt-[7px] text-[#c0c0c0]">回答即可得2分贡献分，回答被采纳获得系统赠送积分</div>
        </div>
      </div>
    </div>
  );
}

function BrowserWindow() {
  return (
    <div className="flex h-full min-w-0 flex-1 flex-col overflow-hidden border-l-[5px] border-[#0b2dbf] bg-white">
      <BrowserChrome />
      <div className="ml-[2px] flex min-h-0 flex-1 flex-col">
        <PageHeader />
        <div className="mt-[12px] flex min-h-0 flex-1">
          <PageSide />
          <PageMain />
        </div>
      </div>
    </div>
  );
}

export default function App() {
  return (
    <div className="relative flex h-[701px] w-[1420px] overflow-hidden bg-white text-xs leading-4 text-black [font-family:'Noto_Sans_CJK_SC','Liberation_Sans',sans-serif]">
      <CadWindow />
      <BrowserWindow />
      <FloatBar />

      {/* red annotations drawn over the screenshot */}
      <svg viewBox="0 0 1420 701" className="pointer-events-none absolute inset-0 z-30 h-[701px] w-[1420px]">
        <ellipse cx="671.500" cy="357" rx="206.500" ry="140" fill="none" stroke="#e60a0a" strokeWidth="3" />
        <path d="M1258 403L340 231" stroke="#e60a0a" strokeWidth="3" />
        <path d="M328 228l19-5-3 12z" fill="#e60a0a" />
        <path d="M346 252h-30" stroke="#e60a0a" strokeWidth="2.500" />
        <path d="M305 252l16-5v9z" fill="#e60a0a" />
      </svg>
    </div>
  );
}
